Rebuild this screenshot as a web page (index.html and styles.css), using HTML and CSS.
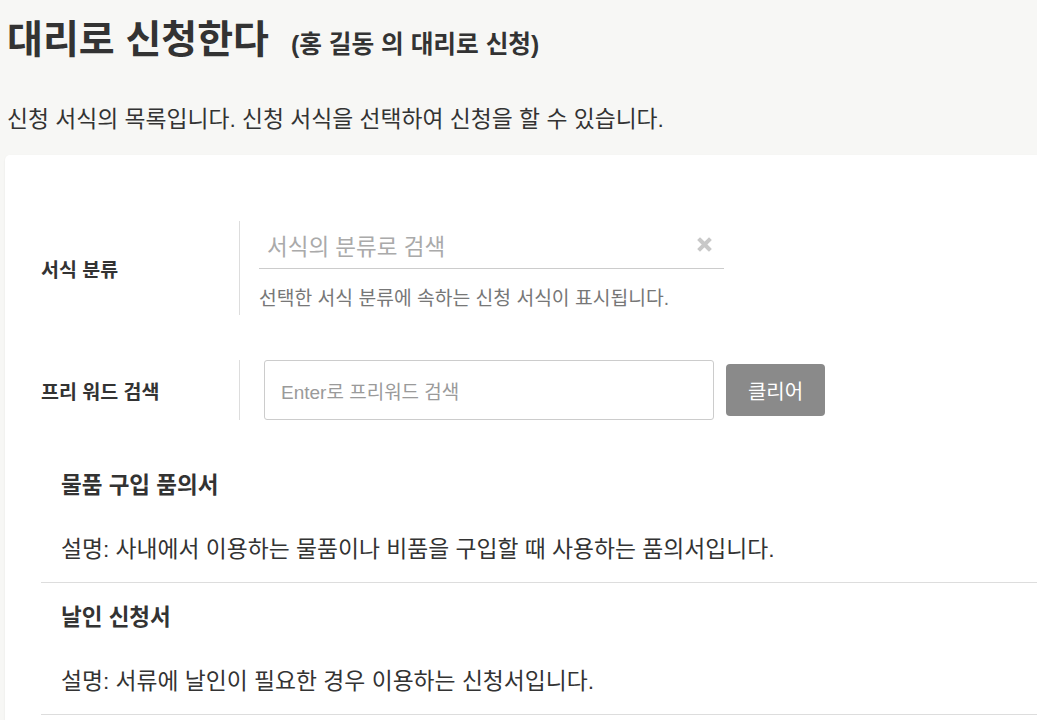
FILE: index.html
```html
<!DOCTYPE html>
<html lang="ko">
<head>
<meta charset="utf-8">
<title>대리로 신청한다</title>
<link rel="stylesheet" href="styles.css">
</head>
<body>
<div class="page">
  <header class="page-head">
    <h1 class="title"><span class="title-main">대리로 신청한다</span><span class="subtitle">(홍 길동 의 대리로 신청)</span></h1>
    <p class="lead">신청 서식의 목록입니다. 신청 서식을 선택하여 신청을 할 수 있습니다.</p>
  </header>
  <section class="card">
    <div class="form">
      <div class="form-row row-category">
        <div class="form-label">서식 분류</div>
        <div class="form-field">
          <div class="line-input">
            <span class="placeholder big">서식의 분류로 검색</span>
            <svg class="clear-x" width="15" height="15" viewBox="0 0 15 15"><path d="M3 3 L12 12 M12 3 L3 12" stroke="#c8c8c8" stroke-width="4" stroke-linecap="square"/></svg>
          </div>
          <div class="help">선택한 서식 분류에 속하는 신청 서식이 표시됩니다.</div>
        </div>
      </div>
      <div class="form-row row-free">
        <div class="form-label">프리 워드 검색</div>
        <div class="form-field">
          <div class="free-group">
            <div class="box-input"><span class="placeholder">Enter로 프리워드 검색</span></div>
            <button class="btn-clear">클리어</button>
          </div>
        </div>
      </div>
    </div>
    <ul class="list">
      <li class="item">
        <div class="item-title">물품 구입 품의서</div>
        <div class="item-desc">설명: 사내에서 이용하는 물품이나 비품을 구입할 때 사용하는 품의서입니다.</div>
      </li>
      <li class="item">
        <div class="item-title">날인 신청서</div>
        <div class="item-desc">설명: 서류에 날인이 필요한 경우 이용하는 신청서입니다.</div>
      </li>
    </ul>
  </section>
</div>
</body>
</html>
```
FILE: styles.css
```css
html, body {
  margin: 0;
  padding: 0;
}
body {
  background: #f7f7f5;
  color: #333;
  font-family: "Liberation Sans", "Noto Sans CJK KR", sans-serif;
  overflow: hidden;
  height: 720px;
}
.page {
  width: 1037px;
}
.page-head {
  padding: 20px 0 0 7px;
}
.title {
  margin: 0;
  height: 40px;
  display: flex;
  align-items: baseline;
  font-weight: bold;
  color: #333;
}
.title-main {
  font-size: 39px;
  line-height: 40px;
}
.subtitle {
  font-size: 24.7px;
  line-height: 40px;
  margin-left: 22px;
}
.lead {
  margin: 45px 0 0;
  font-size: 22.8px;
  line-height: 28px;
  height: 28px;
  color: #333;
}
.card {
  margin: 22px -20px 0 5px;
  background: #fff;
  border-radius: 5px;
  box-shadow: 0 1px 2px rgba(0,0,0,0.08);
  padding: 66px 0 40px 36px;
  min-height: 600px;
}
.form-row {
  display: grid;
  grid-template-columns: 199px 1fr;
}
.row-free {
  margin-top: 45px;
}
.form-label {
  border-right: 1px solid #ddd;
  display: flex;
  align-items: center;
  font-size: 19.5px;
  font-weight: bold;
  color: #333;
}
.form-field {
  padding-left: 19px;
}
.row-category .form-field {
  padding-bottom: 5px;
}
.line-input {
  width: 465px;
  height: 48px;
  box-sizing: border-box;
  border-bottom: 1px solid #ccc;
  display: flex;
  align-items: center;
  justify-content: space-between;
  padding: 0 12px 0 8px;
}
.placeholder {
  color: #9a9a9a;
  font-size: 19px;
}
.placeholder.big {
  font-size: 22.5px;
  color: #aaa;
}
.clear-x {
  display: block;
}
.help {
  margin-top: 19px;
  font-size: 19.3px;
  line-height: 22px;
  color: #777;
}
.free-group {
  display: flex;
  align-items: center;
  margin-left: 5px;
}
.box-input {
  width: 450px;
  height: 60px;
  box-sizing: border-box;
  border: 1px solid #ccc;
  border-radius: 3px;
  display: flex;
  align-items: center;
  padding-left: 16px;
}
.btn-clear {
  margin-left: 12px;
  width: 99px;
  height: 52px;
  border: none;
  border-radius: 4px;
  background: #8a8a8a;
  color: #fff;
  font-family: "Liberation Sans", "Noto Sans CJK KR", sans-serif;
  font-size: 20px;
}
.list {
  list-style: none;
  margin: 31px 0 0;
  padding: 0;
}
.item {
  padding: 17px 20px 15px;
  border-bottom: 1px solid #ddd;
}
.item-title {
  font-size: 22.5px;
  line-height: 36px;
  font-weight: bold;
  color: #333;
}
.item-desc {
  margin-top: 27px;
  font-size: 22.8px;
  line-height: 36px;
  color: #333;
}
```
